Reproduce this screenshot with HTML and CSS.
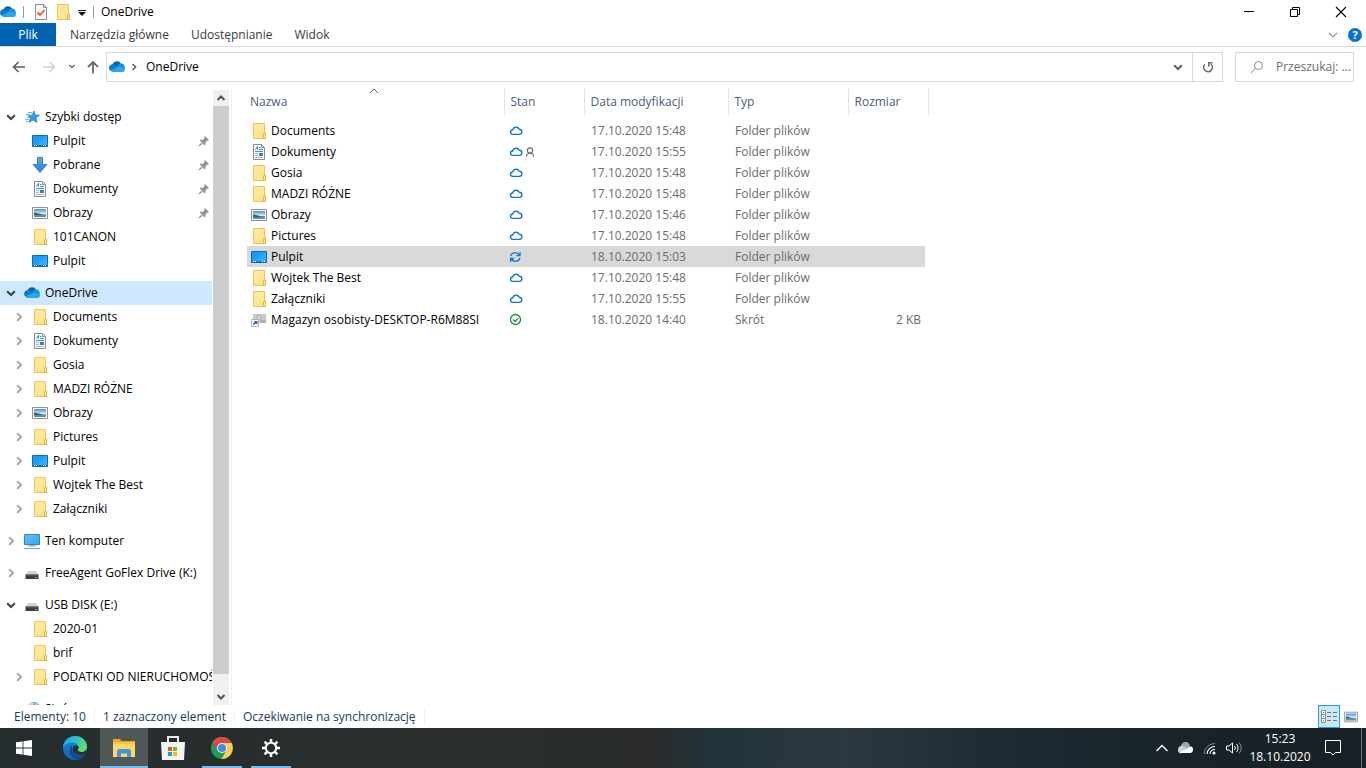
FILE: index.html
```html
<!DOCTYPE html>
<html lang="pl">
<head>
  <meta charset="UTF-8">
  <title>OneDrive</title>
  <link rel="stylesheet" href="styles.css">
</head>
<body>

  <svg class="sprite" aria-hidden="true">
    <defs>
      <linearGradient id="gFolder" x1="0" y1="0" x2="1" y2="1">
        <stop offset="0" stop-color="#ffeba5"/><stop offset="1" stop-color="#ffdf86"/>
      </linearGradient>
      <linearGradient id="gDesk" x1="0" y1="0" x2="1" y2="1">
        <stop offset="0" stop-color="#1595f5"/><stop offset="1" stop-color="#27a8ff"/>
      </linearGradient>
      <linearGradient id="gPic" x1="0" y1="0" x2="0" y2="1">
        <stop offset="0" stop-color="#4a90e0"/><stop offset="0.6" stop-color="#e0f0fb"/>
      </linearGradient>
      <linearGradient id="gArrow" x1="0" y1="0" x2="0" y2="1">
        <stop offset="0" stop-color="#5ba6ea"/><stop offset="1" stop-color="#2583d8"/>
      </linearGradient>
      <linearGradient id="gScreen" x1="0" y1="0" x2="1" y2="1">
        <stop offset="0" stop-color="#5cc3ff"/><stop offset="1" stop-color="#2ba6f7"/>
      </linearGradient>
      <linearGradient id="gEdge" x1="0" y1="0" x2="1" y2="0.5">
        <stop offset="0" stop-color="#1c9fe0"/><stop offset="0.5" stop-color="#27c0d0"/><stop offset="1" stop-color="#62e05a"/>
      </linearGradient>
      <linearGradient id="gEdge2" x1="0" y1="0" x2="0" y2="1">
        <stop offset="0" stop-color="#1a8ee0"/><stop offset="1" stop-color="#0b62b8"/>
      </linearGradient>
    </defs>

    <symbol id="onedrive" viewBox="0 0 16 16">
      <path d="M3.600 5.200A4.600 4.600 0 0 1 12 4.600L9.500 9 3 7z" fill="#0864b9"/>
      <path d="M0 9a3.900 3.900 0 0 1 5.600-3.600L11 8.600 2 12A3.600 3.600 0 0 1 0 9z" fill="#0f78d4"/>
      <path d="M8.400 7.200A3.600 3.600 0 0 1 12.200 4.600c2.200 0 3.300 1.600 3.300 3 .5.700.5 1.600.5 2.200L10.200 8.200z" fill="#1490df"/>
      <path d="M1.400 11.400 8.600 7.900c2-.8 3.500.5 4.400.6 2 0 3 1 3 2.300A2.700 2.700 0 0 1 13.200 13H3.800a3.800 3.800 0 0 1-2.400-1.600z" fill="#28a8ea"/>
    </symbol>

    <symbol id="folder" viewBox="0 0 16 16">
      <path d="M2.500.5h11v9.500h1v5.500h-12z" fill="url(#gFolder)" stroke="#eec54f"/>
      <path d="M12.500 15.500V11l.8-1h1.200v5.500z" fill="#ffe596" stroke="#e3b740"/>
    </symbol>

    <symbol id="desktop" viewBox="0 0 16 16">
      <path d="M.5 2.500h15v11H.5z" fill="url(#gDesk)" stroke="#0a6cb8"/>
      <path d="M15 3v9H4z" fill="#3fb3ff" opacity=".5"/>
      <path d="M1 12h14v1H1z" fill="#1180cf"/>
      <path d="M2 12h1v1H2zM4 12h1v1H4zM11 12h1v1h-1zM13 12h1v1h-1z" fill="#fff"/>
    </symbol>

    <symbol id="document" viewBox="0 0 16 16">
      <path d="M2.500.5h8l3 3v12h-11z" fill="#fff" stroke="#8d8d8d"/>
      <path d="M10.500.5v3h3" fill="none" stroke="#8d8d8d"/>
      <path d="M4.500 5.500 6 2.500h.5V6M8 3.500h1.500M8 5.500h4M4 7.500h8" fill="none" stroke="#3a97e2"/>
      <path d="M4 9.500h3M4 11.500h3M4 13.500h8" fill="none" stroke="#9cb3c9"/>
      <path d="M8 9h4v3H8z" fill="#3f7fb3"/>
    </symbol>

    <symbol id="picture" viewBox="0 0 16 16">
      <path d="M.5 2.500h15v11H.5z" fill="#fff" stroke="#909090"/>
      <path d="M2 4h12v8H2z" fill="url(#gPic)"/>
      <path d="M2 7.500c3 0 5 2 12 2V10H2z" fill="#2f6b5a"/>
      <path d="M2 10h12v2H2z" fill="#5b8fae"/>
    </symbol>

    <symbol id="download" viewBox="0 0 16 16">
      <path d="M5.500.5h5v7H15L8 15.500 1 7.500h4.500z" fill="url(#gArrow)" stroke="#3a85cc"/>
    </symbol>

    <symbol id="star" viewBox="0 0 16 16">
      <path d="M10 2l1.200 4 4.300.2L12 9l1 4.500-4-2.500-4 2.500 1.500-4.500L4 6.500l4-.3z" fill="#2f9de8" stroke="#1b7fd0" stroke-width=".7"/>
      <path d="M4 3.500h4M2 5.500h3M3 8.500h3M1 10.500h4M2 12.500h2" stroke="#63b7ef" stroke-width="1"/>
    </symbol>

    <symbol id="computer" viewBox="0 0 16 16">
      <path d="M.5 1.500h15v10H.5z" fill="url(#gScreen)" stroke="#4a7fa5"/>
      <path d="M6 12h4v1H6z" fill="#b9c6d0"/>
      <path d="M4 13h8" stroke="#8ba0b3"/>
      <path d="M0 15.500h16" stroke="#8099ad"/>
    </symbol>

    <symbol id="drive" viewBox="0 0 16 16">
      <path d="M3.500 6h9l2 4h-13z" fill="#d4d7da"/>
      <path d="M1.500 9.500h13V14h-13z" fill="#3b3e41"/>
      <path d="M1.500 9.500h13v1h-13z" fill="#6d7073"/>
      <path d="M11 12h2v1h-2z" fill="#4be04b"/>
    </symbol>

    <symbol id="network" viewBox="0 0 16 16">
      <circle cx="10" cy="7" r="6" fill="#4a9cc9"/>
      <path d="M5 4c2-3 5-3 5-1s-3 2-3 4zM11 2c3 0 4 3 4 5l-3-1z" fill="#b9dcec"/>
    </symbol>

    <symbol id="shortcut" viewBox="0 0 16 16">
      <path d="M2 2h13v9H2z" fill="#c9c9c9"/>
      <circle cx="8" cy="5.500" r="2" fill="#e3e3e3" stroke="#a5a5a5"/>
      <path d="M9 8h6v3H9z" fill="#b0b0b0"/>
      <path d="M.5 7.500h7v7h-7z" fill="#fff" stroke="#b5b5b5"/>
      <path d="M2 13.500c-.3-1.500.5-2.800 1.800-3.200L2.800 9.200 6.500 9v3.700l-1.200-1C4 12 3 12.300 2 13.500z" fill="#1f5fae"/>
    </symbol>

    <symbol id="pin" viewBox="0 0 12 12">
      <path d="M7 1l4 4-1 .8-.8-.2L7.500 7.500 7.300 10 6.500 10.500 1.800 5.500 2.500 4.800 5 4.700 6.600 2.800 6.300 1.800z" fill="#8b979f"/>
      <path d="M3.800 8.200 1 11" stroke="#8b979f" stroke-width="1.300"/>
    </symbol>

    <symbol id="chev-down" viewBox="0 0 10 10">
      <path d="M1.200 3.200 5 7l3.800-3.800" fill="none" stroke="currentColor" stroke-width="2"/>
    </symbol>
    <symbol id="chev-right" viewBox="0 0 10 10">
      <path d="M3.200 1.200 7 5 3.200 8.800" fill="none" stroke="currentColor" stroke-width="1.900"/>
    </symbol>

    <symbol id="cloud" viewBox="0 0 16 16">
      <path d="M4.800 11.400A2.200 2.200 0 0 1 4.600 7a3.600 3.600 0 0 1 6.700-.8 2.600 2.600 0 0 1-.1 5.200z" fill="none" stroke="#0f78d4" stroke-width="1.400"/>
    </symbol>
    <symbol id="person" viewBox="0 0 10 10">
      <circle cx="5" cy="3.500" r="2.600" fill="none" stroke="#6b6b6b" stroke-width="1.100"/>
      <path d="M1.300 9.800C1.500 7.300 3 6.200 5 6.200s3.500 1.100 3.700 3.600" fill="none" stroke="#6b6b6b" stroke-width="1.100"/>
    </symbol>
    <symbol id="sync" viewBox="0 0 16 16">
      <path d="M2.600 7C3.400 3.600 8.700 2.200 11.300 6M12 3v3.500H8.500M12 9c-.8 3.400-6 4.800-8.700 1M2.600 13V9.500h3.500" fill="none" stroke="#0f78d4" stroke-width="1.300"/>
    </symbol>
    <symbol id="synced" viewBox="0 0 16 16">
      <circle cx="7.500" cy="7.500" r="5" fill="none" stroke="#1b8f3a" stroke-width="1.300"/>
      <path d="M5 7.500l2 2 3.200-3.400" fill="none" stroke="#1b8f3a" stroke-width="1.300"/>
    </symbol>
  </svg>

  <header class="titlebar">
    <svg class="icon"><use href="#onedrive"/></svg>
    <span class="bar-sep"></span>
    <button class="quick" aria-label="Właściwości">
      <svg width="14" height="16" viewBox="0 0 14 16"><path d="M1.500.5h8l3 3v12h-11z" fill="#f8f8f8" stroke="#8f8f8f"/><path d="M9.500.5v3h3" fill="none" stroke="#8f8f8f"/><path d="M3.500 8.500 6 11l4.500-5" fill="none" stroke="#f0592a" stroke-width="1.800"/></svg>
    </button>
    <button class="quick" aria-label="Nowy folder"><svg class="icon"><use href="#folder"/></svg></button>
    <button class="quick" aria-label="Dostosuj pasek">
      <svg width="8" height="8" viewBox="0 0 8 8"><path d="M0 2.500h8" stroke="#111"/><path d="M0 4h8L4 8z" fill="#111"/></svg>
    </button>
    <span class="bar-sep"></span>
    <span class="title">OneDrive</span>
    <div class="window-buttons">
      <button aria-label="Minimalizuj"><svg width="12" height="12" viewBox="0 0 12 12"><path d="M1 5.500h10" stroke="#000"/></svg></button>
      <button aria-label="Przywróć"><svg width="12" height="12" viewBox="0 0 12 12"><path d="M1.500 3.500h7v7h-7zM3.500 3V1.500h7v7H9" fill="none" stroke="#000"/></svg></button>
      <button aria-label="Zamknij"><svg width="12" height="12" viewBox="0 0 12 12"><path d="M1 1l10 10M11 1 1 11" stroke="#000" stroke-width="1.100"/></svg></button>
    </div>
  </header>

  <nav class="tabs">
    <button class="tab tab-file">Plik</button>
    <button class="tab">Narzędzia główne</button>
    <button class="tab">Udostępnianie</button>
    <button class="tab">Widok</button>
    <div class="tabs-end">
      <button class="ribbon-toggle" aria-label="Rozwiń wstążkę"><svg width="10" height="10" viewBox="0 0 10 10"><path d="M1 3l4 4 4-4" fill="none" stroke="#9a9a9a" stroke-width="1.200"/></svg></button>
      <button class="help" aria-label="Pomoc">?</button>
    </div>
  </nav>

  <div class="toolbar">
    <div class="history">
      <button aria-label="Wstecz"><svg width="14" height="14" viewBox="0 0 14 14"><path d="M13 7H1.500M6.500 2l-5 5 5 5" fill="none" stroke="#5c5c5c" stroke-width="1.500"/></svg></button>
      <button aria-label="Dalej"><svg width="14" height="14" viewBox="0 0 14 14"><path d="M1 7h11.500M7.500 2l5 5-5 5" fill="none" stroke="#d2d2d2" stroke-width="1.500"/></svg></button>
      <button class="recent" aria-label="Ostatnie lokalizacje"><svg width="8" height="8" viewBox="0 0 8 8"><path d="M1.500 2l2.500 2.500L6.500 2" fill="none" stroke="#707070" stroke-width="1.500"/></svg></button>
      <button aria-label="W górę"><svg width="14" height="14" viewBox="0 0 14 14"><path d="M7 13.500V2M2 7l5-5 5 5" fill="none" stroke="#6a6a6a" stroke-width="1.800"/></svg></button>
    </div>
    <div class="address">
      <svg class="icon"><use href="#onedrive"/></svg>
      <svg class="crumb-arrow"><use href="#chev-right"/></svg>
      <a class="crumb" href="#">OneDrive</a>
      <button class="address-drop" aria-label="Poprzednie lokalizacje"><svg class="arrow"><use href="#chev-down"/></svg></button>
      <button class="refresh" aria-label="Odśwież"><svg width="12" height="12" viewBox="0 0 12 12"><path d="M2.800 3.500A4.300 4.300 0 1 0 9 3.300M10.500 1.700H6.800v3.800" fill="none" stroke="#6a6a6a" stroke-width="1.600"/></svg></button>
    </div>
    <label class="search">
      <svg width="14" height="14" viewBox="0 0 14 14"><circle cx="8.500" cy="5.500" r="4" fill="none" stroke="#8a8a8a"/><path d="M5.500 8.500 1 13" stroke="#8a8a8a"/></svg>
      <input type="text" aria-label="Przeszukaj" placeholder="Przeszukaj: ...">
    </label>
  </div>

  <main class="content">
    <aside class="sidebar">
      <div class="tree">
        <ul class="group">
          <li class="node root"><button class="toggle open" aria-label="Zwiń"><svg class="arrow"><use href="#chev-down"/></svg></button><svg class="icon"><use href="#star"/></svg><a href="#">Szybki dostęp</a></li>
          <li class="node"><svg class="icon"><use href="#desktop"/></svg><a href="#">Pulpit</a><svg class="pin"><use href="#pin"/></svg></li>
          <li class="node"><svg class="icon"><use href="#download"/></svg><a href="#">Pobrane</a><svg class="pin"><use href="#pin"/></svg></li>
          <li class="node"><svg class="icon"><use href="#document"/></svg><a href="#">Dokumenty</a><svg class="pin"><use href="#pin"/></svg></li>
          <li class="node"><svg class="icon"><use href="#picture"/></svg><a href="#">Obrazy</a><svg class="pin"><use href="#pin"/></svg></li>
          <li class="node"><svg class="icon"><use href="#folder"/></svg><a href="#">101CANON</a></li>
          <li class="node"><svg class="icon"><use href="#desktop"/></svg><a href="#">Pulpit</a></li>
        </ul>
        <ul class="group">
          <li class="node root current"><button class="toggle open" aria-label="Zwiń"><svg class="arrow"><use href="#chev-down"/></svg></button><svg class="icon"><use href="#onedrive"/></svg><a href="#">OneDrive</a></li>
          <li class="node"><button class="toggle" aria-label="Rozwiń"><svg class="arrow"><use href="#chev-right"/></svg></button><svg class="icon"><use href="#folder"/></svg><a href="#">Documents</a></li>
          <li class="node"><button class="toggle" aria-label="Rozwiń"><svg class="arrow"><use href="#chev-right"/></svg></button><svg class="icon"><use href="#document"/></svg><a href="#">Dokumenty</a></li>
          <li class="node"><button class="toggle" aria-label="Rozwiń"><svg class="arrow"><use href="#chev-right"/></svg></button><svg class="icon"><use href="#folder"/></svg><a href="#">Gosia</a></li>
          <li class="node"><button class="toggle" aria-label="Rozwiń"><svg class="arrow"><use href="#chev-right"/></svg></button><svg class="icon"><use href="#folder"/></svg><a href="#">MADZI RÓŻNE</a></li>
          <li class="node"><button class="toggle" aria-label="Rozwiń"><svg class="arrow"><use href="#chev-right"/></svg></button><svg class="icon"><use href="#picture"/></svg><a href="#">Obrazy</a></li>
          <li class="node"><button class="toggle" aria-label="Rozwiń"><svg class="arrow"><use href="#chev-right"/></svg></button><svg class="icon"><use href="#folder"/></svg><a href="#">Pictures</a></li>
          <li class="node"><button class="toggle" aria-label="Rozwiń"><svg class="arrow"><use href="#chev-right"/></svg></button><svg class="icon"><use href="#desktop"/></svg><a href="#">Pulpit</a></li>
          <li class="node"><button class="toggle" aria-label="Rozwiń"><svg class="arrow"><use href="#chev-right"/></svg></button><svg class="icon"><use href="#folder"/></svg><a href="#">Wojtek The Best</a></li>
          <li class="node"><button class="toggle" aria-label="Rozwiń"><svg class="arrow"><use href="#chev-right"/></svg></button><svg class="icon"><use href="#folder"/></svg><a href="#">Załączniki</a></li>
        </ul>
        <ul class="group">
          <li class="node root"><button class="toggle" aria-label="Rozwiń"><svg class="arrow"><use href="#chev-right"/></svg></button><svg class="icon"><use href="#computer"/></svg><a href="#">Ten komputer</a></li>
        </ul>
        <ul class="group">
          <li class="node root"><button class="toggle" aria-label="Rozwiń"><svg class="arrow"><use href="#chev-right"/></svg></button><svg class="icon"><use href="#drive"/></svg><a href="#">FreeAgent GoFlex Drive (K:)</a></li>
        </ul>
        <ul class="group">
          <li class="node root"><button class="toggle open" aria-label="Zwiń"><svg class="arrow"><use href="#chev-down"/></svg></button><svg class="icon"><use href="#drive"/></svg><a href="#">USB DISK (E:)</a></li>
          <li class="node"><svg class="icon"><use href="#folder"/></svg><a href="#">2020-01</a></li>
          <li class="node"><svg class="icon"><use href="#folder"/></svg><a href="#">brif</a></li>
          <li class="node"><button class="toggle" aria-label="Rozwiń"><svg class="arrow"><use href="#chev-right"/></svg></button><svg class="icon"><use href="#folder"/></svg><a href="#">PODATKI OD NIERUCHOMOŚCI</a></li>
        </ul>
        <ul class="group">
          <li class="node root"><svg class="icon"><use href="#network"/></svg><a href="#">Sieć</a></li>
        </ul>
      </div>
      <div class="scrollbar">
        <button aria-label="Przewiń w górę"><svg width="10" height="10" viewBox="0 0 10 10"><path d="M1.500 7 5 3.500 8.500 7" fill="none" stroke="#505050" stroke-width="2"/></svg></button>
        <div class="thumb"></div>
        <button aria-label="Przewiń w dół"><svg width="10" height="10" viewBox="0 0 10 10"><path d="M1.500 3 5 6.500 8.500 3" fill="none" stroke="#505050" stroke-width="2"/></svg></button>
      </div>
    </aside>

    <section class="files">
      <table class="file-table">
        <colgroup>
          <col class="col-name"><col class="col-state"><col class="col-date"><col class="col-type"><col class="col-size">
        </colgroup>
        <thead>
          <tr>
            <th>Nazwa<svg class="sort" width="10" height="6" viewBox="0 0 10 6"><path d="M1 5l4-4 4 4" fill="none" stroke="#666"/></svg></th>
            <th>Stan</th>
            <th>Data modyfikacji</th>
            <th>Typ</th>
            <th>Rozmiar</th>
          </tr>
        </thead>
        <tbody>
          <tr><td><a class="file" href="#"><svg class="icon"><use href="#folder"/></svg>Documents</a></td><td class="state"><svg class="icon"><use href="#cloud"/></svg></td><td>17.10.2020 15:48</td><td>Folder plików</td><td></td></tr>
          <tr><td><a class="file" href="#"><svg class="icon"><use href="#document"/></svg>Dokumenty</a></td><td class="state"><svg class="icon"><use href="#cloud"/></svg><svg class="shared"><use href="#person"/></svg></td><td>17.10.2020 15:55</td><td>Folder plików</td><td></td></tr>
          <tr><td><a class="file" href="#"><svg class="icon"><use href="#folder"/></svg>Gosia</a></td><td class="state"><svg class="icon"><use href="#cloud"/></svg></td><td>17.10.2020 15:48</td><td>Folder plików</td><td></td></tr>
          <tr><td><a class="file" href="#"><svg class="icon"><use href="#folder"/></svg>MADZI RÓŻNE</a></td><td class="state"><svg class="icon"><use href="#cloud"/></svg></td><td>17.10.2020 15:48</td><td>Folder plików</td><td></td></tr>
          <tr><td><a class="file" href="#"><svg class="icon"><use href="#picture"/></svg>Obrazy</a></td><td class="state"><svg class="icon"><use href="#cloud"/></svg></td><td>17.10.2020 15:46</td><td>Folder plików</td><td></td></tr>
          <tr><td><a class="file" href="#"><svg class="icon"><use href="#folder"/></svg>Pictures</a></td><td class="state"><svg class="icon"><use href="#cloud"/></svg></td><td>17.10.2020 15:48</td><td>Folder plików</td><td></td></tr>
          <tr class="selected"><td><a class="file" href="#"><svg class="icon"><use href="#desktop"/></svg>Pulpit</a></td><td class="state"><svg class="icon"><use href="#sync"/></svg></td><td>18.10.2020 15:03</td><td>Folder plików</td><td></td></tr>
          <tr><td><a class="file" href="#"><svg class="icon"><use href="#folder"/></svg>Wojtek The Best</a></td><td class="state"><svg class="icon"><use href="#cloud"/></svg></td><td>17.10.2020 15:48</td><td>Folder plików</td><td></td></tr>
          <tr><td><a class="file" href="#"><svg class="icon"><use href="#folder"/></svg>Załączniki</a></td><td class="state"><svg class="icon"><use href="#cloud"/></svg></td><td>17.10.2020 15:55</td><td>Folder plików</td><td></td></tr>
          <tr><td><a class="file" href="#"><svg class="icon"><use href="#shortcut"/></svg>Magazyn osobisty-DESKTOP-R6M88SI</a></td><td class="state"><svg class="icon"><use href="#synced"/></svg></td><td>18.10.2020 14:40</td><td>Skrót</td><td class="size">2 KB</td></tr>
        </tbody>
      </table>
    </section>
  </main>

  <footer class="statusbar">
    <span class="status">Elementy: 10</span>
    <span class="status">1 zaznaczony element</span>
    <span class="status">Oczekiwanie na synchronizację</span>
    <div class="views">
      <button class="view active" aria-label="Szczegóły">
        <svg width="16" height="14" viewBox="0 0 16 14"><path d="M.5.500h4v12h-4zM.5 4.500h4M.5 8.500h4" fill="#fff" stroke="#8b8b8b"/><path d="M2 2h1v1H2z" fill="#444"/><path d="M2 6h1v1H2z" fill="#1e88e5"/><path d="M2 10h1v1H2z" fill="#d22"/><path d="M6 2.500h4M12 2.500h4M6 6.500h4M12 6.500h4M6 10.500h4M12 10.500h4" stroke="#777"/></svg>
      </button>
      <button class="view" aria-label="Duże ikony"><svg width="14" height="14" viewBox="0 0 16 16"><use href="#picture"/></svg></button>
    </div>
  </footer>

  <div class="taskbar">
    <button class="task start" aria-label="Start">
      <svg width="16" height="16" viewBox="0 0 16 16"><path d="M0 2.300 6.600 1.400v6.200H0zM7.400 1.300 16 0v7.600H7.400zM0 8.400h6.600v6.200L0 13.700zM7.400 8.400H16V16l-8.600-1.300z" fill="#fff"/></svg>
    </button>
    <button class="task" aria-label="Microsoft Edge">
      <svg width="24" height="24" viewBox="0 0 24 24"><circle cx="12" cy="12" r="12" fill="url(#gEdge2)"/><path d="M0 11.500C.5 5 5.500 0 12 0c7 0 12 5 12 10.500 0 3.500-2.500 5.500-5.500 5.500-2.500 0-4-.8-4-1.800 0-.9 1-1.200 1-3.200 0-2.500-2.500-4.500-6-4.500C5 6.500 1.500 8.500 0 11.500z" fill="url(#gEdge)"/><path d="M9 9.500c-2.500 2-3 5.500-1.500 8.500 1.500 3.500 5 5.800 8.500 5.300 2.500-.8 4.800-2.500 6.300-5-5.300 2.700-12.300.7-13.300-3.800-.4-2 0-3.500 0-5z" fill="#11488f"/><path d="M14.600 13.800c0 1.200 1.600 2.200 4 2.200 2 0 3.500-.6 4.500-2l1 3-2 1.200c-4 1.600-9.600.7-11.600-2.200-1.500-2-1.200-5 .8-6.300 2.500-.5 4.500.800 4.500 2 0 .9-1.200 1.300-1.200 2.100z" fill="#292f30"/></svg>
    </button>
    <button class="task running focused" aria-label="Eksplorator plików">
      <svg width="22" height="20" viewBox="0 0 22 20"><path d="M0 1h7l1.500 2H22v4H0z" fill="#e8a920"/><path d="M0 4h22v15H0z" fill="#ffd766"/><path d="M0 4h22v2H0z" fill="#fbc63e"/><path d="M4 19v-6l1.500-2h11l1.500 2v6h-4v-3.500H8V19z" fill="#3f97dd"/></svg>
    </button>
    <button class="task" aria-label="Microsoft Store">
      <svg width="24" height="24" viewBox="0 0 24 24"><path d="M7 6V1h10v5" fill="none" stroke="#e8e8e8" stroke-width="2"/><path d="M0 6h24l-1 18H1z" fill="#f5f5f5"/><path d="M7 11h4v4H7z" fill="#f35325"/><path d="M12 11h4v4h-4z" fill="#81bc06"/><path d="M7 16h4v4H7z" fill="#05a6f0"/><path d="M12 16h4v4h-4z" fill="#ffba08"/></svg>
    </button>
    <button class="task running" aria-label="Google Chrome">
      <svg width="22" height="22" viewBox="0 0 22 22"><circle cx="11" cy="11" r="11" fill="#1f9d58"/><path d="M11 11 1.500 5.500A11 11 0 0 1 20.500 5.500z" fill="#dd4b3e"/><path d="M1.500 5.500A11 11 0 0 1 11 0v6.200L6.800 13.500z" fill="#dd4b3e"/><path d="M20.600 6A11 11 0 0 1 10.500 22l4.800-8.500L11 6z" fill="#ffcd46"/><circle cx="11" cy="11" r="5" fill="#f4f4f4"/><circle cx="11" cy="11" r="4" fill="#4587f3"/></svg>
    </button>
    <button class="task running" aria-label="Ustawienia">
      <svg width="18" height="18" viewBox="0 0 18 18"><circle cx="9" cy="9" r="5.200" fill="none" stroke="#fff" stroke-width="2"/><path d="M9 0v3.500M9 14.500V18M0 9h3.500M14.500 9H18M2.600 2.600l2.500 2.500M12.900 12.900l2.500 2.500M15.400 2.600l-2.500 2.500M5.100 12.900l-2.500 2.500" stroke="#fff" stroke-width="2.600"/></svg>
    </button>

    <div class="tray">
      <button class="tray-button" aria-label="Pokaż ukryte ikony"><svg width="14" height="14" viewBox="0 0 14 14"><path d="M1.500 10 7 4.500l5.500 5.500" fill="none" stroke="#fff" stroke-width="1.300"/></svg></button>
      <button class="tray-button" aria-label="OneDrive"><svg width="16" height="12" viewBox="0 0 16 12"><path d="M3 5a4.500 4.500 0 0 1 9-1L8 8z" fill="#a5a8aa"/><path d="M0 7.500A3.500 3.500 0 0 1 5 4.200L10 7 3 11.500A3.500 3.500 0 0 1 0 7.500z" fill="#cfd0d1"/><path d="M2 10.500 9 7a4 4 0 0 1 4.500-2.500A3.800 3.800 0 0 1 13 11H3.500A2.800 2.800 0 0 1 2 10.500z" fill="#fff"/></svg></button>
      <button class="tray-button" aria-label="Sieć"><svg width="16" height="16" viewBox="0 0 16 16"><circle cx="12" cy="13" r="1.500" fill="#fff"/><path d="M8 14a4.500 4.500 0 0 1 5-4.500M5 14a8 8 0 0 1 8-7.500" fill="none" stroke="#fff" stroke-width="1.100"/><path d="M2 14A11 11 0 0 1 13 3.500" fill="none" stroke="#858b8e"/></svg></button>
      <button class="tray-button" aria-label="Głośność"><svg width="16" height="16" viewBox="0 0 16 16"><path d="M.5 6v4h2.500l3.500 3V3L3 6z" fill="none" stroke="#fff"/><path d="M8.500 6a3 3 0 0 1 0 4M10.500 4a6 6 0 0 1 0 8" fill="none" stroke="#fff"/><path d="M13 2.500a8 8 0 0 1 0 11" fill="none" stroke="#858b8e"/></svg></button>
      <div class="clock"><time>15:23</time><time>18.10.2020</time></div>
      <button class="notifications" aria-label="Centrum akcji"><svg width="16" height="16" viewBox="0 0 16 16"><path d="M.5.500h15v12h-5L8 15l-2.500-2.500h-5z" fill="none" stroke="#fff"/></svg></button>
      <div class="show-desktop"></div>
    </div>
  </div>

</body>
</html>
```

FILE: styles.css
```css
* {
  box-sizing: border-box;
}
body {
  margin: 0;
  height: 100vh;
  display: flex;
  flex-direction: column;
  overflow: hidden;
  background: #fff;
  color: #000;
  font-family: "Segoe UI", "Open Sans", "Noto Sans", sans-serif;
  font-size: 12px;
  line-height: 16px;
}
button {
  display: flex;
  align-items: center;
  justify-content: center;
  margin: 0;
  padding: 0;
  border: none;
  background: none;
  color: inherit;
  font: inherit;
}
a {
  color: inherit;
  text-decoration: none;
}
svg {
  display: block;
  flex-shrink: 0;
}
.sprite {
  position: absolute;
  width: 0;
  height: 0;
}
.icon {
  width: 16px;
  height: 16px;
}
.arrow {
  width: 10px;
  height: 10px;
}

/* title bar */
.titlebar {
  display: flex;
  align-items: center;
  height: 23px;
}
.bar-sep {
  width: 1px;
  height: 12px;
  margin: 0 7px;
  background: #9a9a9a;
}
.quick {
  margin-right: 7px;
}
.quick:first-of-type {
  margin-left: 3px;
}
.quick:nth-of-type(3) {
  margin: 0;
}
.window-buttons {
  display: flex;
  margin-left: auto;
  padding-right: 2px;
}
.window-buttons button {
  width: 46px;
  height: 20px;
}

/* ribbon tabs */
.tabs {
  display: flex;
  height: 24px;
  border-bottom: 1px solid #dadbdc;
}
.tab {
  height: 23px;
  padding: 0 11px;
  color: #3b3b3b;
}
.tab-file {
  width: 56px;
  margin-right: 3px;
  background: #0063b1;
  color: #fff;
}
.tabs-end {
  display: flex;
  align-items: center;
  gap: 10px;
  margin-left: auto;
  padding-right: 4px;
}
.help {
  width: 14px;
  height: 14px;
  border-radius: 50%;
  background: #0a74d1;
  color: #fff;
  font-size: 11px;
  font-weight: 700;
}

/* address bar */
.toolbar {
  display: flex;
  align-items: center;
  height: 41px;
  padding: 0 12px 2px 0;
}
.history {
  display: flex;
  align-items: center;
  width: 106px;
  padding-left: 12px;
  gap: 16px;
}
.history .recent {
  margin: 0 -6px 0 -4px;
}
.address {
  display: flex;
  align-items: center;
  flex: 1;
  height: 30px;
  border: 1px solid #d9d9d9;
  padding-left: 2px;
}
.crumb-arrow {
  width: 8px;
  height: 8px;
  margin: 0 8px 0 5px;
  color: #606060;
}
.address-drop {
  width: 28px;
  height: 28px;
  margin-left: auto;
  color: #606060;
}
.refresh {
  width: 30px;
  height: 28px;
  border-left: 1px solid #d9d9d9;
}
.search {
  display: flex;
  align-items: center;
  width: 119px;
  height: 30px;
  margin-left: 12px;
  padding-left: 14px;
  border: 1px solid #d9d9d9;
}
.search input {
  width: 78px;
  margin-left: 12px;
  padding: 0;
  border: none;
  outline: none;
  background: none;
  font: inherit;
}
.search input::placeholder {
  color: #6d6d6d;
}

/* panes */
.content {
  display: flex;
  flex: 1;
  min-height: 0;
}
.sidebar {
  display: flex;
  width: 232px;
  padding: 2px 2px 0 0;
  border-right: 1px solid #f0f0f0;
}
.tree {
  flex: 1;
  min-width: 0;
  margin-right: 1px;
  overflow: hidden;
  padding-top: 15px;
}
.group {
  margin: 0 0 8px;
  padding: 0;
  list-style: none;
}
.node {
  display: flex;
  align-items: center;
  height: 24px;
  padding-left: 32px;
  white-space: nowrap;
}
.node a {
  flex: 1;
  min-width: 0;
  margin-left: 5px;
  overflow: hidden;
}
.root {
  padding-left: 24px;
}
.current {
  background: #cde8ff;
}
.toggle {
  width: 14px;
  height: 24px;
  margin: 0 6px 0 -20px;
  color: #a6a6a6;
}
.open {
  color: #404040;
}
.pin {
  width: 12px;
  height: 12px;
  margin-right: 2px;
}
.scrollbar {
  display: flex;
  flex-direction: column;
  width: 16px;
  background: #f0f0f0;
}
.scrollbar button {
  height: 16px;
}
.thumb {
  flex: 1;
  margin-bottom: 15px;
  background: #cdcdcd;
}

/* file list */
.files {
  flex: 1;
  padding-left: 15px;
}
.file-table {
  width: 681px;
  table-layout: fixed;
  border-collapse: collapse;
}
.col-name {
  width: 257px;
}
.col-state,
.col-size {
  width: 80px;
}
.col-date {
  width: 144px;
}
.col-type {
  width: 120px;
}
th {
  position: relative;
  height: 27px;
  padding: 0 6px;
  border-right: 1px solid #e5e5e5;
  color: #4c607a;
  font-weight: 400;
  text-align: left;
}
th:first-child {
  padding-left: 3px;
}
.sort {
  position: absolute;
  top: 0;
  left: 50%;
  margin-left: -6px;
}
thead::after {
  content: "";
  display: block;
  height: 5px;
}
td {
  height: 21px;
  padding: 0 7px;
  color: #6d6d6d;
  white-space: nowrap;
}
td:first-child {
  padding: 0 0 0 4px;
}
.file {
  display: flex;
  align-items: center;
  gap: 4px;
  color: #000;
}
.state {
  padding: 0 4px;
}
.state svg {
  display: inline-block;
  vertical-align: middle;
}
.shared {
  width: 10px;
  height: 10px;
  margin-left: 1px;
}
.selected td {
  background: #d9d9d9;
}
.selected td:last-child {
  background: linear-gradient(#d9d9d9, #d9d9d9) no-repeat;
  background-size: calc(100% - 3px) 100%;
}
.size {
  text-align: right;
}

/* status bar */
.statusbar {
  display: flex;
  align-items: center;
  height: 23px;
  padding-left: 6px;
  color: #1e395b;
}
.status {
  padding: 0 8px;
  border-right: 1px solid #f0f0f0;
}
.views {
  display: flex;
  margin-left: auto;
  padding-right: 4px;
}
.view {
  width: 22px;
  height: 23px;
}
.view.active {
  border: 1px solid #26a0da;
  background: #cbe8f6;
}

/* taskbar */
.taskbar {
  display: flex;
  gap: 1px;
  height: 40px;
  background: linear-gradient(90deg, #262d2e 0, #292e2d 34%, #292b2b 48%, #22333b 52%, #2b3842 62%, #1d2c35 72%, #192328 86%, #182127 100%);
  color: #fff;
}
.task {
  position: relative;
  width: 48px;
  height: 40px;
}
.start {
  margin-right: 2px;
}
.running::after {
  content: "";
  position: absolute;
  right: 4px;
  bottom: 0;
  left: 4px;
  height: 2px;
  background: #76b9ed;
}
.focused {
  background: #50585a;
}
.focused::after {
  right: 0;
  left: 0;
}
.tray {
  display: flex;
  align-items: center;
  margin-left: auto;
}
.tray-button {
  width: 24px;
  height: 40px;
}
.clock {
  display: flex;
  flex-direction: column;
  align-items: center;
  width: 68px;
  line-height: 18px;
}
.notifications {
  width: 38px;
  height: 40px;
  margin-right: 9px;
}
.show-desktop {
  width: 5px;
  height: 40px;
  border-left: 1px solid #6b7175;
}
```
